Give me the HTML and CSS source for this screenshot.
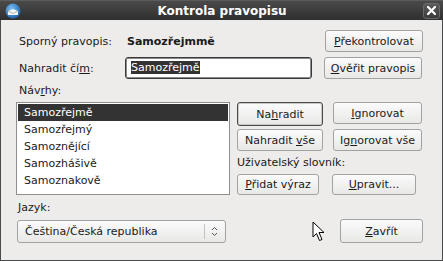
FILE: index.html
```html
<!doctype html>
<html>
<head>
<meta charset="utf-8">
<title>Kontrola pravopisu</title>
<link rel="stylesheet" href="styles.css">
</head>

<body>
<div class="window">
	<div class="titlebar">
		<svg class="app-icon" width="16" height="16" viewBox="0 0 16 16">
			<defs>
				<radialGradient id="g" cx="0.4" cy="0.35" r="0.7">
					<stop offset="0" stop-color="#7cc0f4"/>
					<stop offset="1" stop-color="#1a5ea8"/>
				</radialGradient>
			</defs>
			<circle cx="8" cy="8" r="7.5" fill="url(#g)"/>
			<path d="M3 8 L8 6 L13 8 L13 12 L3 12 Z" fill="#f4f4f4"/>
			<path d="M3 8 L8 10.5 L13 8" fill="none" stroke="#9aa" stroke-width="0.8"/>
		</svg>
		<span class="title">Kontrola pravopisu</span>
		<span class="close">
			<svg width="11" height="11" viewBox="0 0 11 11"><path d="M2 2 L9 9 M9 2 L2 9" stroke="#fff" stroke-width="2.2" stroke-linecap="round"/></svg>
		</span>
	</div>

	<div class="content">
		<div class="row row-first">
			<span class="label lbl-wide">Sporný pravopis:</span>
			<span class="word">Samozřejmmě</span>
			<button class="btn btn-side"><u>P</u>řekontrolovat</button>
		</div>

		<div class="row row-second">
			<span class="label lbl-input">Nahradit čí<u>m</u>:</span>
			<div class="input"><span class="sel">Samozřejmě</span></div>
			<button class="btn btn-side"><u>O</u>věřit pravopis</button>
		</div>

		<div class="label lbl-list">Náv<u>r</u>hy:</div>

		<div class="row row-main">
			<ul class="list">
				<li class="active">Samozřejmě</li>
				<li>Samozřejmý</li>
				<li>Samoznějící</li>
				<li>Samozhášivě</li>
				<li>Samoznakově</li>
			</ul>
			<div class="actions">
				<div class="btn-grid">
					<button class="btn btn-default">Na<u>h</u>radit</button>
					<button class="btn btn-ign"><u>I</u>gnorovat</button>
					<button class="btn">Nahradit <u>v</u>še</button>
					<button class="btn btn-ign">Ig<u>n</u>orovat vše</button>
				</div>
				<div class="label lbl-dict">Uživatelský slovník:</div>
				<div class="dict-btns">
					<button class="btn btn-add"><u>P</u>řidat výraz</button>
					<button class="btn btn-edit"><u>U</u>pravit...</button>
				</div>
			</div>
		</div>

		<div class="label lbl-lang"><u>J</u>azyk:</div>

		<div class="row row-bottom">
			<div class="combo">
				<span class="combo-text">Čeština/Česká republika</span>
				<span class="combo-sep"></span>
				<svg class="combo-arrows" width="7" height="11" viewBox="0 0 7 11">
					<path d="M1 4 L3.5 1.5 L6 4 M1 7 L3.5 9.5 L6 7" fill="none" stroke="#555" stroke-width="1"/>
				</svg>
			</div>
			<button class="btn btn-close"><u>Z</u>avřít</button>
		</div>
	</div>

	<svg class="cursor" width="13" height="22" viewBox="0 0 13 22">
		<path d="M1 1 L1 16 L4.5 12.5 L7.5 19.5 L10 18.5 L7 11.5 L12 11.5 Z" fill="#fff" stroke="#000" stroke-width="1" stroke-linejoin="round"/>
	</svg>
</div>
</body>
</html>
```

FILE: styles.css
```css
	*{
		box-sizing:border-box;
		}
	body{
		margin:0;
		background:#edeceb;
		font-family:"DejaVu Sans","Noto Sans",sans-serif;
		font-size:11px;
		color:#1a1a1a;
		}
	.window{
		width:443px;
		height:261px;
		position:relative;
		background:#edeceb;
		border:1px solid #4a4a4a;
		border-top:0;
		}
	.titlebar{
		height:20px;
		margin:0 -1px;
		display:flex;
		align-items:center;
		padding:0 3px 0 5px;
		background:linear-gradient(#4a4a4a,#2f2f2f);
		border-top:1px solid #5c5c5c;
		}
	.title{
		flex:1;
		text-align:center;
		color:#fff;
		font-weight:bold;
		font-size:12px;
		}
	.close{
		width:17px;
		height:16px;
		display:flex;
		align-items:center;
		justify-content:center;
		border:1px solid #6a6a6a;
		border-radius:3px;
		background:linear-gradient(#5a5a5a,#3a3a3a);
		}
	.content{
		padding:10px 19px 0 15px;
		}
	.row{
		display:flex;
		align-items:center;
		}
	.label{
		padding-left:3px;
		}
	.lbl-wide{
		width:111px;
		}
	.word{
		font-weight:bold;
		flex:1;
		}
	.lbl-input{
		width:109px;
		}
	.row-second{
		margin-top:5px;
		}
	.input{
		width:187px;
		height:22px;
		border:1px solid #3a3a3a;
		border-radius:3px;
		background:#fff;
		box-shadow:inset 0 0 0 1px #8a8a8a;
		padding:3px 5px;
		margin-right:12px;
		}
	.sel{
		background:#333;
		color:#fff;
		}
	.btn{
		font-family:inherit;
		font-size:11px;
		color:#1a1a1a;
		height:22px;
		padding:0;
		border:1px solid #a2a2a2;
		border-radius:3px;
		background:linear-gradient(#fbfbfb,#e8e8e7);
		}
	.btn-side{
		width:98px;
		}
	.lbl-list{
		margin-top:5px;
		height:16px;
		}
	.row-main{
		align-items:flex-start;
		margin-top:2px;
		}
	.list{
		list-style:none;
		margin:0;
		padding:1px;
		width:214px;
		height:93px;
		border:1px solid #8e8e8e;
		background:#fff;
		}
	.list li{
		height:17px;
		line-height:17px;
		padding-left:6px;
		}
	.list .active{
		background:#333;
		color:#fff;
		}
	.actions{
		margin-left:7px;
		}
	.btn-grid{
		display:grid;
		grid-template-columns:86px 89px;
		column-gap:10px;
		row-gap:5px;
		}
	.btn-grid .btn{
		height:22px;
		}
	.btn-default{
		height:24px !important;
		margin-bottom:-2px;
		border:1px solid #4a4a4a;
		box-shadow:inset 0 0 0 1px #c8c8c8;
		}
	.lbl-dict{
		padding-left:0;
		margin-top:5px;
		height:17px;
		}
	.dict-btns{
		display:flex;
		gap:13px;
		margin-top:1px;
		}
	.btn-add{
		width:82px;
		height:21px;
		}
	.btn-edit{
		width:84px;
		height:21px;
		}
	.lbl-lang{
		margin-top:6px;
		padding-left:2px;
		height:17px;
		}
	.row-bottom{
		margin-top:1px;
		}
	.combo{
		width:209px;
		height:23px;
		margin-left:1px;
		display:flex;
		align-items:center;
		border:1px solid #a2a2a2;
		border-radius:3px;
		background:linear-gradient(#fbfbfb,#e8e8e7);
		padding-left:7px;
		}
	.combo-text{
		flex:1;
		}
	.combo-sep{
		width:1px;
		height:15px;
		background:#c4c4c4;
		margin-right:6px;
		}
	.combo-arrows{
		margin-right:7px;
		}
	.btn-close{
		width:83px;
		height:24px;
		margin-left:auto;
		}
	.cursor{
		position:absolute;
		left:311px;
		top:221px;
		}
```
